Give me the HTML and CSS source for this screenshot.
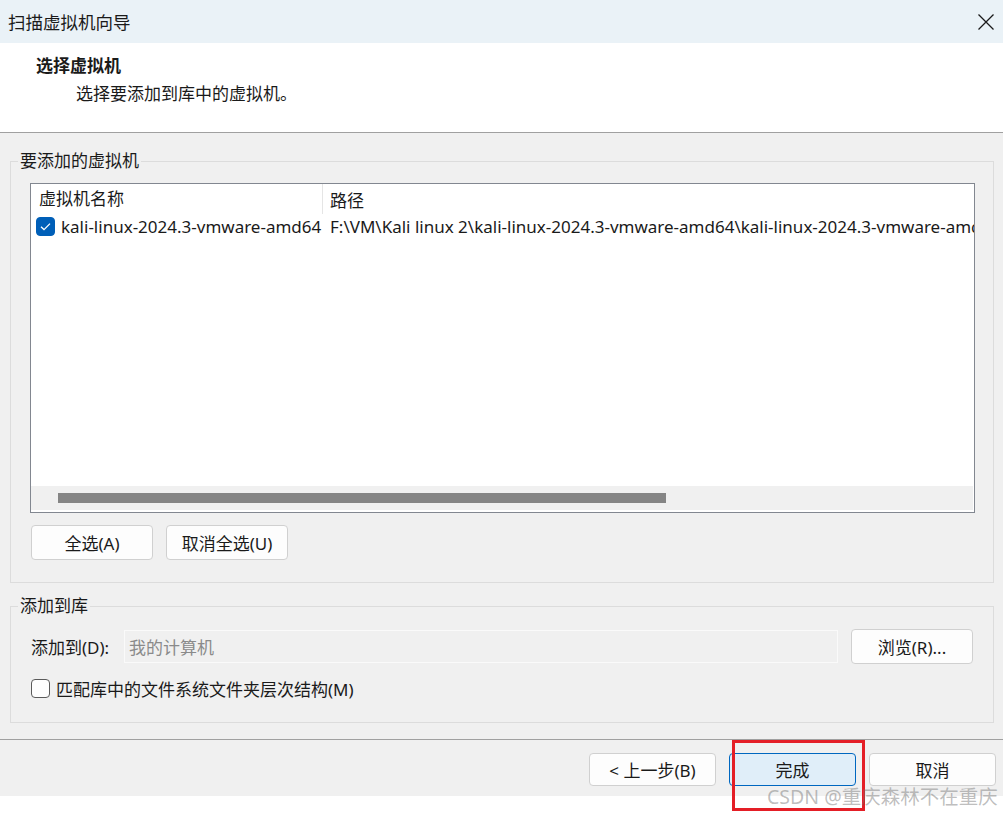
FILE: index.html
```html
<!DOCTYPE html>
<html>
<head>
    <title>扫描虚拟机向导</title>
    <link rel="stylesheet" href="styles.css">
</head>
<body>
    <div class="window">
        <div class="titlebar">
            <span class="title">扫描虚拟机向导</span>
            <svg class="close" width="18" height="18" viewBox="0 0 18 18">
                <path d="M1.5 1.5 L16.5 16.5 M16.5 1.5 L1.5 16.5" stroke="#1a1a1a" stroke-width="1.3" fill="none"/>
            </svg>
        </div>

        <div class="header">
            <div class="h-title">选择虚拟机</div>
            <div class="h-sub">选择要添加到库中的虚拟机。</div>
        </div>

        <div class="content">
            <fieldset class="group group-vms">
                <legend>要添加的虚拟机</legend>
                <div class="listview">
                    <div class="lv-head">
                        <div class="col col-name">虚拟机名称</div>
                        <div class="col col-path">路径</div>
                    </div>
                    <div class="lv-row">
                        <div class="col col-name">
                            <span class="check on">
                                <svg width="19" height="19" viewBox="0 0 19 19">
                                    <path d="M5 9.8 L8 12.6 L14 6.6" stroke="#fff" stroke-width="1.3" fill="none"/>
                                </svg>
                            </span>
                            kali-linux-2024.3-vmware-amd64
                        </div>
                        <div class="col col-path">F:\VM\Kali linux 2\kali-linux-2024.3-vmware-amd64\kali-linux-2024.3-vmware-amd64.vmx</div>
                    </div>
                    <div class="lv-fill"></div>
                    <div class="hscroll"><div class="thumb"></div></div>
                </div>
                <div class="btn-row">
                    <button class="btn">全选(A)</button>
                    <button class="btn">取消全选(U)</button>
                </div>
            </fieldset>

            <fieldset class="group group-lib">
                <legend>添加到库</legend>
                <div class="lib-row">
                    <label class="lib-label">添加到(D):</label>
                    <div class="lib-input">我的计算机</div>
                    <button class="btn">浏览(R)...</button>
                </div>
                <div class="check-row">
                    <span class="check"></span>
                    <span>匹配库中的文件系统文件夹层次结构(M)</span>
                </div>
            </fieldset>
        </div>

        <div class="footer">
            <button class="btn">&lt; 上一步(B)</button>
            <button class="btn btn-default">完成</button>
            <button class="btn">取消</button>
        </div>
        <div class="below"></div>

        <div class="highlight"></div>
        <div class="watermark">CSDN @重庆森林不在重庆</div>
    </div>
</body>
</html>
```

FILE: styles.css
```css
body {
    margin: 0;
    font-family: "Noto Sans", "Noto Sans CJK SC", sans-serif;
    font-size: 17px;
    color: #1a1a1a;
    background: #ffffff;
}
.window {
    position: relative;
    width: 1003px;
    height: 813px;
    overflow: hidden;
}
.titlebar {
    height: 43px;
    background: #eaf2f7;
    display: flex;
    align-items: center;
    justify-content: space-between;
    padding: 0 8px 0 8px;
}
.title {
    font-size: 17.5px;
}
.header {
    height: 90px;
    background: #ffffff;
    padding: 12px 0 0 36px;
    box-sizing: border-box;
    border-bottom: 1px solid #a0a0a0;
}
.h-title {
    font-weight: bold;
    line-height: 22px;
}
.h-sub {
    margin: 6px 0 0 40px;
    line-height: 22px;
}
.content {
    background: #f0f0f0;
    padding: 18px 9px 16px 10px;
}
.group {
    margin: 0;
    min-width: 0;
    border: 1px solid #dcdcdc;
    padding: 0 18px 22px 19px;
}
.group legend {
    padding: 0 2px;
    margin-left: -12px;
    line-height: 20px;
}
.group-lib {
    margin-top: 13px;
    padding-bottom: 21px;
}
.listview {
    margin-top: 12px;
    height: 330px;
    box-sizing: border-box;
    border: 1px solid #828790;
    background: #ffffff;
    display: flex;
    flex-direction: column;
    overflow: hidden;
}
.lv-head, .lv-row {
    display: flex;
    white-space: nowrap;
}
.lv-head {
    height: 30px;
    align-items: center;
}
.lv-head .col-name {
    border-right: 1px solid #e5e5e5;
    height: 30px;
    line-height: 30px;
    padding-left: 8px;
}
.lv-head .col-path {
    padding-left: 7px;
}
.col-name {
    width: 292px;
    flex: none;
    box-sizing: border-box;
}
.col-path {
    flex: none;
}
.lv-row {
    height: 24px;
    align-items: center;
}
.lv-row .col-name {
    display: flex;
    align-items: center;
    padding-left: 5px;
}
.lv-row .col-path {
    padding-left: 7px;
}
.check {
    width: 19px;
    height: 19px;
    box-sizing: border-box;
    border: 1px solid #5a5a5a;
    border-radius: 4px;
    background: #fdfdfd;
    display: inline-block;
    flex: none;
}
.check.on {
    background: #005fb8;
    border-color: #005fb8;
    margin-right: 6px;
}
.check.on svg {
    display: block;
    margin: -1px;
}
.lv-fill {
    flex: 1;
}
.hscroll {
    height: 24px;
    background: #f0f0f0;
    margin: 0 1px 2px 0;
    padding-top: 7px;
    box-sizing: border-box;
}
.thumb {
    width: 608px;
    height: 10px;
    margin-left: 27px;
    background: #858585;
}
.btn-row {
    display: flex;
    gap: 13px;
    margin-top: 12px;
    padding-left: 1px;
}
.btn {
    font-family: inherit;
    font-size: 17px;
    color: #1a1a1a;
    width: 122px;
    height: 35px;
    background: #fdfdfd;
    border: 1px solid #d0d0d0;
    border-radius: 4px;
    padding: 0;
}
.lib-row {
    display: flex;
    align-items: center;
    margin-top: 13px;
    padding-left: 1px;
}
.lib-label {
    width: 93px;
}
.lib-input {
    width: 714px;
    height: 33px;
    box-sizing: border-box;
    border: 1px solid #fafafa;
    color: #8a8a8a;
    padding: 3px 0 0 4px;
}
.lib-row .btn {
    margin-left: 13px;
}
.check-row {
    display: flex;
    align-items: center;
    gap: 6px;
    margin-top: 12px;
    padding-left: 1px;
}
.footer {
    border-top: 1px solid #a0a0a0;
    background: #f0f0f0;
    height: 57px;
    display: flex;
    justify-content: flex-end;
    gap: 13px;
    padding: 13px 7px 0 0;
    box-sizing: border-box;
}
.footer .btn {
    width: 127px;
    height: 33px;
}
.btn-default {
    background: #e0eef9;
    border-color: #0067c0;
}
.highlight {
    position: absolute;
    left: 732px;
    top: 740px;
    width: 133px;
    height: 71px;
    box-sizing: border-box;
    border: 3px solid #e41e26;
}
.watermark {
    position: absolute;
    left: 767px;
    top: 781px;
    font-size: 19.5px;
    color: rgba(110, 110, 110, 0.45);
    white-space: nowrap;
}
```
